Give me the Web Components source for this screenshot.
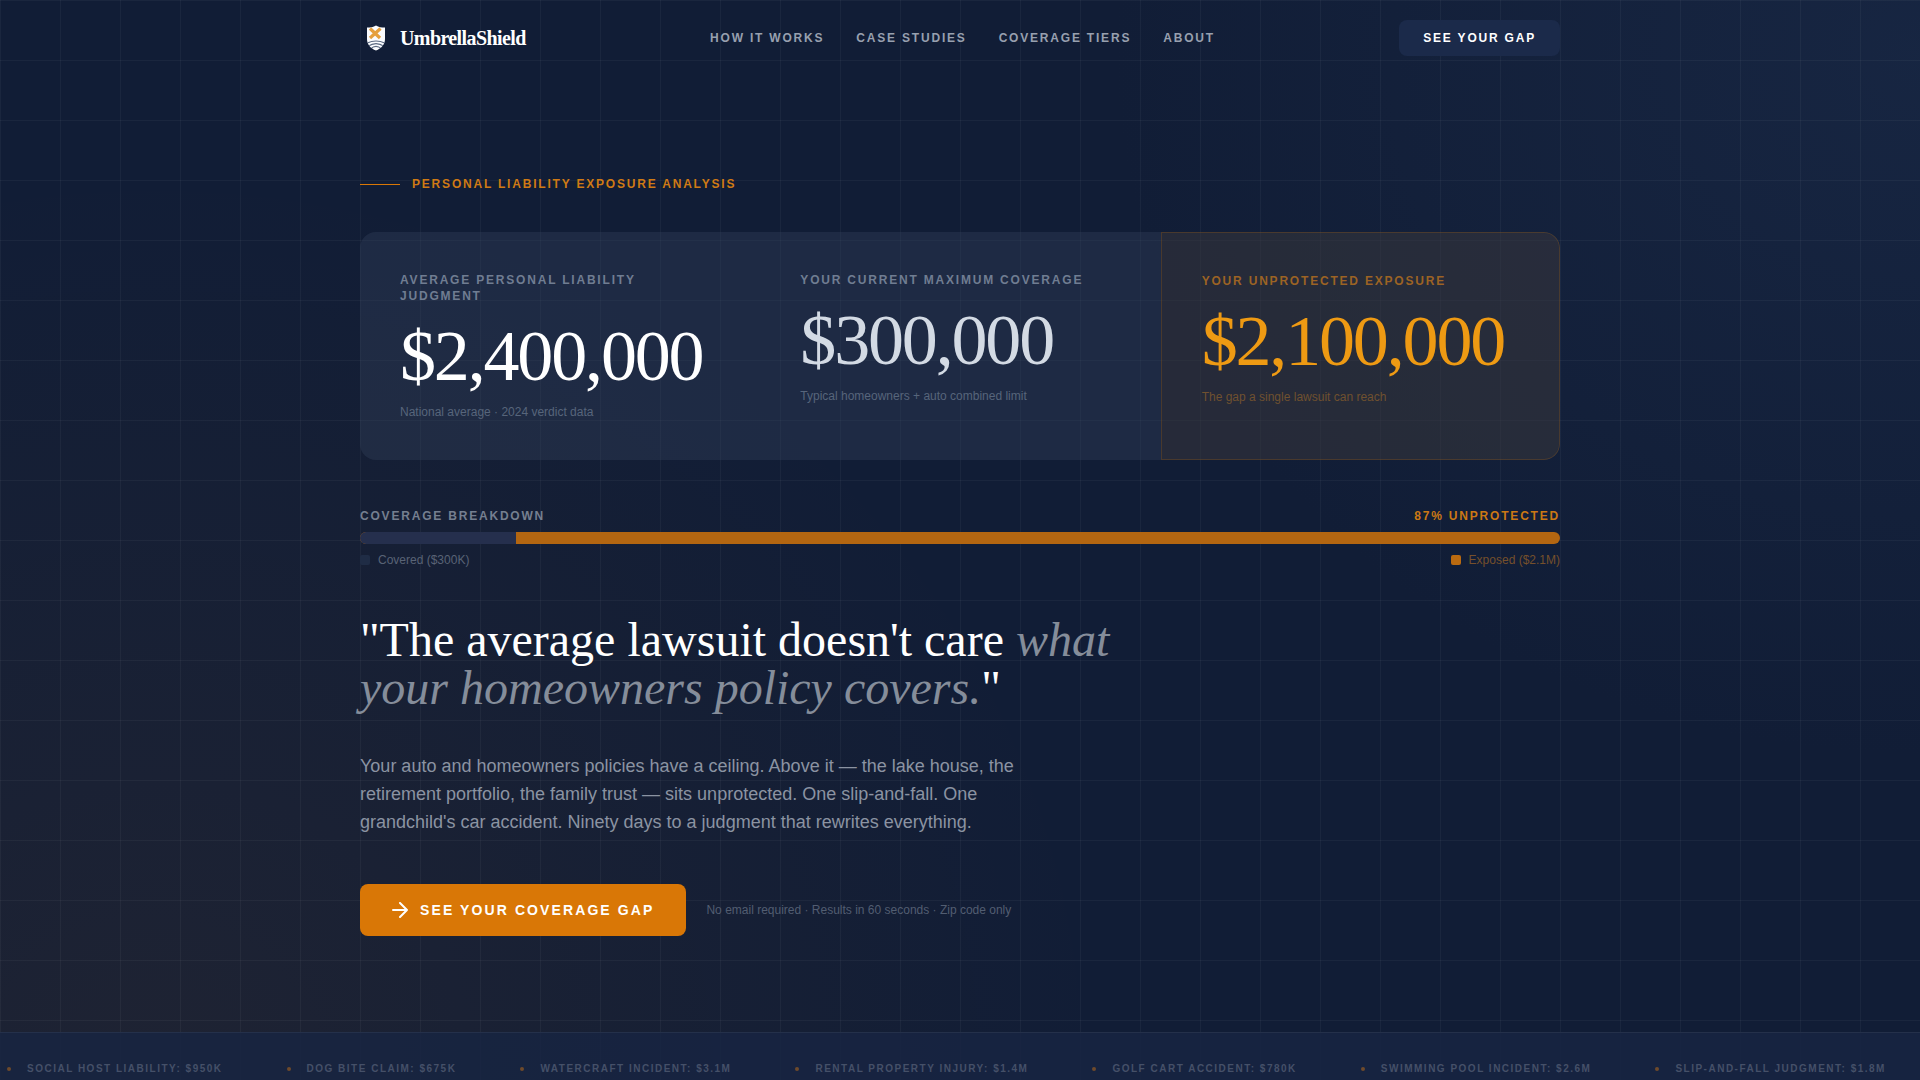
<!DOCTYPE html>
<html lang="en">
<head>
<meta charset="utf-8">
<title>UmbrellaShield</title>
<style>
  :root {
    --amber: #d97706;
    --navy: #111d36;
    --panel: #1b2a4a;
    --sans: "Liberation Sans", Arial, sans-serif;
    --serif: "Liberation Serif", "Times New Roman", serif;
  }
  body {
    margin: 0;
    min-height: 100vh;
    display: flex;
    flex-direction: column;
    overflow-x: hidden;
    color: #fff;
    font: 12px/16px var(--sans);
    background:
      linear-gradient(rgba(255, 255, 255, 0.04) 1px, transparent 1px) 0 0 / 60px 60px,
      linear-gradient(90deg, rgba(255, 255, 255, 0.04) 1px, transparent 1px) 0 0 / 60px 60px,
      radial-gradient(ellipse 42% 65% at 100% 5%, rgba(30, 48, 80, 0.45), transparent),
      radial-gradient(ellipse 50% 85% at 8% 100%, rgba(217, 119, 6, 0.065), transparent),
      var(--navy);
  }
  hero-section { flex: 1; }
  hero-copy em { color: #858d9a; }
</style>
</head>
<body>
  <site-nav>
    <a href="#how">How it works</a>
    <a href="#cases">Case studies</a>
    <a href="#tiers">Coverage tiers</a>
    <a href="#about">About</a>
    <button slot="action" type="button">See your gap</button>
  </site-nav>

  <hero-section>
    <eyebrow-label>Personal liability exposure analysis</eyebrow-label>

    <stat-row>
      <stat-card>
        <span slot="label">Average personal liability judgment</span>
        $2,400,000
        <span slot="note">National average · 2024 verdict data</span>
      </stat-card>
      <stat-card class="muted">
        <span slot="label">Your current maximum coverage</span>
        $300,000
        <span slot="note">Typical homeowners + auto combined limit</span>
      </stat-card>
      <stat-card class="exposed">
        <span slot="label">Your unprotected exposure</span>
        $2,100,000
        <span slot="note">The gap a single lawsuit can reach</span>
      </stat-card>
    </stat-row>

    <coverage-bar covered="13">
      <span slot="title">Coverage breakdown</span>
      <span slot="total">87% unprotected</span>
      <span slot="covered">Covered ($300K)</span>
      <span slot="exposed">Exposed ($2.1M)</span>
    </coverage-bar>

    <hero-copy>
      <span slot="quote">"The average lawsuit doesn't care <em>what your homeowners policy covers.</em>"</span>
      Your auto and homeowners policies have a ceiling. Above it — the lake house, the retirement portfolio, the family trust — sits unprotected. One slip-and-fall. One grandchild's car accident. Ninety days to a judgment that rewrites everything.
    </hero-copy>

    <cta-row>
      See your coverage gap
      <span slot="note">No email required · Results in 60 seconds · Zip code only</span>
    </cta-row>
  </hero-section>

  <risk-ticker>
    <ticker-item>Social host liability: $950K</ticker-item>
    <ticker-item>Dog bite claim: $675K</ticker-item>
    <ticker-item>Watercraft incident: $3.1M</ticker-item>
    <ticker-item>Rental property injury: $1.4M</ticker-item>
    <ticker-item>Golf cart accident: $780K</ticker-item>
    <ticker-item>Swimming pool incident: $2.6M</ticker-item>
    <ticker-item>Slip-and-fall judgment: $1.8M</ticker-item>
  </risk-ticker>

<script>
const define = (name, html, setup) => {
  customElements.define(name, class extends HTMLElement {
    constructor () {
      super()
      this.attachShadow({ mode: 'open' }).innerHTML = html
    }

    connectedCallback () {
      if (setup) setup(this)
    }
  })
}

define('brand-logo', `
  <style>
    :host { display: block; }
    a {
      display: flex;
      align-items: center;
      gap: 8px;
      color: #fff;
      font: bold 20px/28px var(--serif);
      letter-spacing: -0.03em;
      text-decoration: none;
    }
    svg { display: block; }
  </style>
  <a href="#top">
    <svg width="32" height="32" viewBox="0 0 32 32" aria-hidden="true">
      <clipPath id="shield">
        <path d="M16 3.4C18.600 5 21.600 5.600 25 5.600V17C25 22.400 21.400 26.400 16 28.600 10.600 26.400 7 22.400 7 17V5.600C10.400 5.600 13.400 5 16 3.400Z"/>
      </clipPath>
      <g clip-path="url(#shield)">
        <rect width="32" height="32" fill="#fbfcfe"/>
        <path d="M10 6.500L20 16M20.500 6.500L10 16" stroke="#e5a03e" stroke-width="3.200"/>
        <g fill="none" stroke="#5a6880" stroke-width="1.100">
          <path d="M6 21.500Q16 16.500 26 21.500"/>
          <path d="M8 24.200Q16 19 24 24.200"/>
          <path d="M10.500 26.800Q16 21.800 21.500 26.800"/>
        </g>
      </g>
    </svg>
    UmbrellaShield
  </a>
`)

define('site-nav', `
  <style>
    :host { display: block; padding: 20px 24px; }
    header {
      display: flex;
      align-items: center;
      justify-content: space-between;
      max-width: 1200px;
      margin: 0 auto;
    }
    nav { display: flex; gap: 32px; }
    ::slotted(*) {
      font: bold 12px/16px var(--sans);
      letter-spacing: 0.15em;
      text-transform: uppercase;
      text-decoration: none;
    }
    ::slotted(a) { color: #98a0af; }
    ::slotted(button) {
      padding: 10px 24px;
      border: 0;
      border-radius: 8px;
      background: var(--panel);
      color: #fff;
      cursor: pointer;
    }
  </style>
  <header>
    <brand-logo></brand-logo>
    <nav><slot></slot></nav>
    <slot name="action"></slot>
  </header>
`)

define('hero-section', `
  <style>
    :host { display: block; padding: 100px 24px 96px; }
    main { max-width: 1200px; margin: 0 auto; }
  </style>
  <main><slot></slot></main>
`)

define('eyebrow-label', `
  <style>
    :host {
      display: flex;
      align-items: center;
      gap: 12px;
      margin-bottom: 40px;
      color: #cf7a14;
      font-weight: bold;
      letter-spacing: 0.15em;
      text-transform: uppercase;
    }
    i { width: 40px; height: 1px; background: var(--amber); }
  </style>
  <i></i><slot></slot>
`)

define('stat-row', `
  <style>
    :host {
      display: grid;
      grid-template-columns: repeat(3, 1fr);
      gap: 1px;
      margin-bottom: 48px;
      border-radius: 16px;
      overflow: hidden;
      background: rgba(54, 70, 94, 0.35);
    }
  </style>
  <slot></slot>
`)

define('stat-card', `
  <style>
    :host {
      --label: #707d92;
      --value: #fff;
      --note: #57657b;
      display: block;
      padding: 40px;
    }
    :host(.muted) { --value: #d3dae4; }
    :host(.exposed) {
      --label: #9c6324;
      --value: #ee9a13;
      --note: #70512f;
      border: 1px solid rgba(217, 119, 6, 0.2);
      border-radius: 0 16px 16px 0;
      background: rgba(64, 44, 22, 0.25);
    }
    .label {
      color: var(--label);
      font-weight: bold;
      letter-spacing: 0.15em;
      text-transform: uppercase;
    }
    .value {
      margin: 16px 0 12px;
      color: var(--value);
      font: 72px/72px var(--serif);
      letter-spacing: -0.03em;
    }
    .note { color: var(--note); }
  </style>
  <div class="label"><slot name="label"></slot></div>
  <div class="value"><slot></slot></div>
  <div class="note"><slot name="note"></slot></div>
`)

define('coverage-bar', `
  <style>
    :host { display: block; margin-bottom: 48px; }
    .row { display: flex; justify-content: space-between; }
    .head {
      color: #757f90;
      font-weight: bold;
      letter-spacing: 0.15em;
      text-transform: uppercase;
    }
    .head .total { color: #cb7814; }
    .track {
      display: flex;
      height: 12px;
      margin: 8px 0;
      border-radius: 6px;
      overflow: hidden;
      background: #b36611;
    }
    .fill { background: #252f4d; }
    .key { display: flex; align-items: center; gap: 8px; color: #596375; }
    .key::before {
      content: "";
      width: 10px;
      height: 10px;
      border-radius: 2px;
      background: #1f2c45;
    }
    .key.exposed { color: #76502b; }
    .key.exposed::before { background: #b96a10; }
  </style>
  <div class="row head">
    <slot name="title"></slot>
    <span class="total"><slot name="total"></slot></span>
  </div>
  <div class="track"><div class="fill"></div></div>
  <div class="row">
    <div class="key"><slot name="covered"></slot></div>
    <div class="key exposed"><slot name="exposed"></slot></div>
  </div>
`, el => {
  el.shadowRoot.querySelector('.fill').style.width = el.getAttribute('covered') + '%'
})

define('hero-copy', `
  <style>
    :host { display: block; margin-bottom: 48px; }
    h1 {
      max-width: 800px;
      margin: 0 0 40px;
      font: 48px/48px var(--serif);
    }
    p {
      max-width: 672px;
      margin: 0;
      color: #8b93a2;
      font-size: 18px;
      line-height: 28px;
    }
  </style>
  <h1><slot name="quote"></slot></h1>
  <p><slot></slot></p>
`)

define('cta-row', `
  <style>
    :host { display: flex; align-items: center; gap: 20px; }
    button {
      display: flex;
      align-items: center;
      gap: 12px;
      padding: 16px 32px;
      border: 0;
      border-radius: 8px;
      background: var(--amber);
      color: #fff;
      font: bold 14px/20px var(--sans);
      letter-spacing: 0.15em;
      text-transform: uppercase;
      cursor: pointer;
    }
    .note { color: #525d71; }
  </style>
  <button type="button">
    <svg width="16" height="16" viewBox="4 4 16 16" fill="none" stroke="currentColor" stroke-width="2" stroke-linecap="round" stroke-linejoin="round" aria-hidden="true">
      <path d="M5 12h14M12 5l7 7-7 7"/>
    </svg>
    <span><slot></slot></span>
  </button>
  <span class="note"><slot name="note"></slot></span>
`)

define('risk-ticker', `
  <style>
    :host {
      display: flex;
      gap: 64px;
      padding: 29px 0 4px 7px;
      border-top: 1px solid #24304a;
      overflow: hidden;
      background: rgba(24, 36, 66, 0.85);
    }
  </style>
  <slot></slot>
`)

define('ticker-item', `
  <style>
    :host {
      display: flex;
      flex: none;
      align-items: center;
      gap: 16px;
      color: #455068;
      font-size: 10px;
      font-weight: bold;
      line-height: 14px;
      letter-spacing: 0.15em;
      text-transform: uppercase;
      white-space: nowrap;
    }
    i { width: 4px; height: 4px; border-radius: 50%; background: #6e4a2b; }
  </style>
  <i></i><slot></slot>
`)
</script>
</body>
</html>
